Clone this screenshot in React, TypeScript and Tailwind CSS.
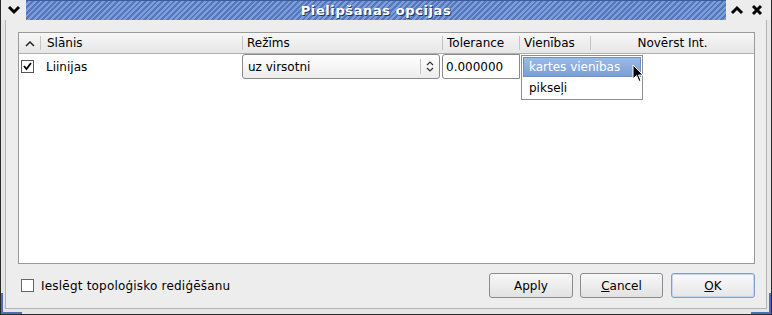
import React from 'react';

const ChevronDown = () => (
  <svg width="14" height="10" viewBox="0 0 14 10">
    <path d="M2 2 L7 7 L12 2" fill="none" stroke="#000" strokeWidth="3" />
  </svg>
);

const ChevronUp = () => (
  <svg width="14" height="10" viewBox="0 0 14 10">
    <path d="M2 8 L7 3 L12 8" fill="none" stroke="#000" strokeWidth="3" />
  </svg>
);

const CloseX = () => (
  <svg width="12" height="12" viewBox="0 0 12 12">
    <path d="M2 2 L10 10 M10 2 L2 10" fill="none" stroke="#000" strokeWidth="3" />
  </svg>
);

const Check = () => (
  <svg width="11" height="11" viewBox="0 0 11 11">
    <path d="M2 5 L4.5 8 L9 2" fill="none" stroke="#000" strokeWidth="1.8" />
  </svg>
);

const Cursor = () => (
  <svg width="12" height="19" viewBox="0 0 12 19">
    <path d="M1 1 L1 15 L4.5 11.5 L7 17.5 L9 16.5 L6.5 11 L11 11 Z" fill="#000" stroke="#fff" strokeWidth="1" />
  </svg>
);

const Sep = () => <div className="w-px h-[14px] bg-[#c4c4c4]" />;

export default function App() {
  return (
    <div className="relative w-[772px] h-[315px] bg-[#e6e6e6] border-l border-r border-b border-[#2a2a2a] flex flex-col font-['DejaVu_Sans',sans-serif] text-[12px] text-black">
      {/* title bar */}
      <div className="h-[20px] flex items-stretch">
        <div className="w-[25px] flex items-center justify-center bg-[#ececec]">
          <ChevronDown />
        </div>
        <div className="flex-1 flex items-center justify-center border-t border-[#3d5c99] bg-[repeating-linear-gradient(135deg,#5577bb_0px,#5577bb_2px,#7d9ed8_2px,#7d9ed8_4px)]">
          <span className="font-bold text-[13px] text-white tracking-[0.6px] [text-shadow:1px_1px_0_#1d3766]">
            Pielipšanas opcijas
          </span>
        </div>
        <div className="w-[45px] flex items-center justify-around bg-[#ececec] pr-[4px]">
          <ChevronUp />
          <CloseX />
        </div>
      </div>

      {/* frame */}
      <div className="flex-1 flex flex-col px-[4px] pb-[5px]">
        <div className="flex-1 flex flex-col bg-[#ededed] border-l border-r border-b border-[#b4b4b4] pl-[12px] pr-[11px] pt-[12px] pb-[10px]">
          {/* table */}
          <div className="relative flex-1 flex flex-col bg-white border border-[#9a9a9a]">
            <div className="h-[21px] flex items-center bg-[linear-gradient(#f7f7f7,#e6e6e6)] border-b border-[#b0b0b0]">
              <div className="w-[21px] flex justify-center">
                <svg width="10" height="7" viewBox="0 0 10 7">
                  <path d="M1 6 L5 2 L9 6" fill="none" stroke="#222" strokeWidth="1.5" />
                </svg>
              </div>
              <Sep />
              <div className="w-[201px] pl-[6px]">Slānis</div>
              <Sep />
              <div className="w-[199px] pl-[4px]">Režīms</div>
              <Sep />
              <div className="w-[76px] pl-[4px]">Tolerance</div>
              <Sep />
              <div className="w-[70px] pl-[4px]">Vienības</div>
              <Sep />
              <div className="flex-1 text-center">Novērst Int.</div>
            </div>

            <div className="h-[25px] flex items-center">
              <div className="w-[22px] flex justify-start pl-[2px]">
                <div className="w-[13px] h-[13px] border border-[#555] bg-white flex items-center justify-center">
                  <Check />
                </div>
              </div>
              <div className="w-[203px] pl-[5px]">Liinijas</div>
              <div className="w-[198px] h-[25px] ml-[-2px] flex items-center rounded-[3px] border border-[#8a8a8a] bg-[linear-gradient(#ffffff,#ececec)]">
                <span className="flex-1 pl-[5px]">uz virsotni</span>
                <div className="w-px h-[15px] bg-[#c0c0c0]" />
                <div className="w-[18px] flex justify-center">
                  <svg width="8" height="11" viewBox="0 0 8 11">
                    <path d="M1 4 L4 1 L7 4 M1 7 L4 10 L7 7" fill="none" stroke="#333" strokeWidth="1.2" />
                  </svg>
                </div>
              </div>
              <div className="w-[78px] h-[25px] ml-[2px] flex items-center rounded-l-[3px] border border-[#8a8a8a] bg-white pl-[3px]">
                0.000000
              </div>
            </div>

            {/* dropdown popup */}
            <div className="absolute left-[502px] top-[22px] w-[122px] bg-white border border-[#8e8e8e] p-px">
              <div className="h-[20px] flex items-center pl-[5px] text-white bg-[linear-gradient(#9bbbe6,#7b9fd5)] border border-[#6f8fc4]">
                kartes vienības
              </div>
              <div className="h-[21px] flex items-center pl-[6px]">pikseļi</div>
            </div>
            <div className="absolute left-[613px] top-[31px]">
              <Cursor />
            </div>
          </div>

          {/* bottom bar */}
          <div className="h-[25px] mt-[9px] flex items-center">
            <div className="w-[13px] h-[13px] ml-[3px] border border-[#666] bg-white" />
            <span className="ml-[7px] tracking-[0.2px]">Ieslēgt topoloģisko rediģēšanu</span>
            <div className="flex-1" />
            <button className="w-[84px] h-[25px] rounded-[3px] border border-[#8c8c8c] bg-[linear-gradient(#f8f8f8,#e2e2e2)]">
              Apply
            </button>
            <button className="w-[83px] h-[25px] ml-[7px] rounded-[3px] border border-[#8c8c8c] bg-[linear-gradient(#f8f8f8,#e2e2e2)]">
              <span className="underline">C</span>ancel
            </button>
            <button className="w-[84px] h-[25px] ml-[8px] rounded-[3px] border border-[#7f9fcf] bg-[linear-gradient(#fafafa,#e6e6e6)] shadow-[inset_0_0_0_1px_#c5d6ef]">
              <span className="underline">O</span>K
            </button>
          </div>
        </div>
      </div>

      {/* resize corner accents */}
      <div className="absolute left-0 bottom-0 w-[21px] h-[21px] border-l-2 border-b-2 border-[#4d70b4]" />
      <div className="absolute right-0 bottom-0 w-[20px] h-[21px] border-r-2 border-b-2 border-[#4d70b4]" />
    </div>
  );
}
